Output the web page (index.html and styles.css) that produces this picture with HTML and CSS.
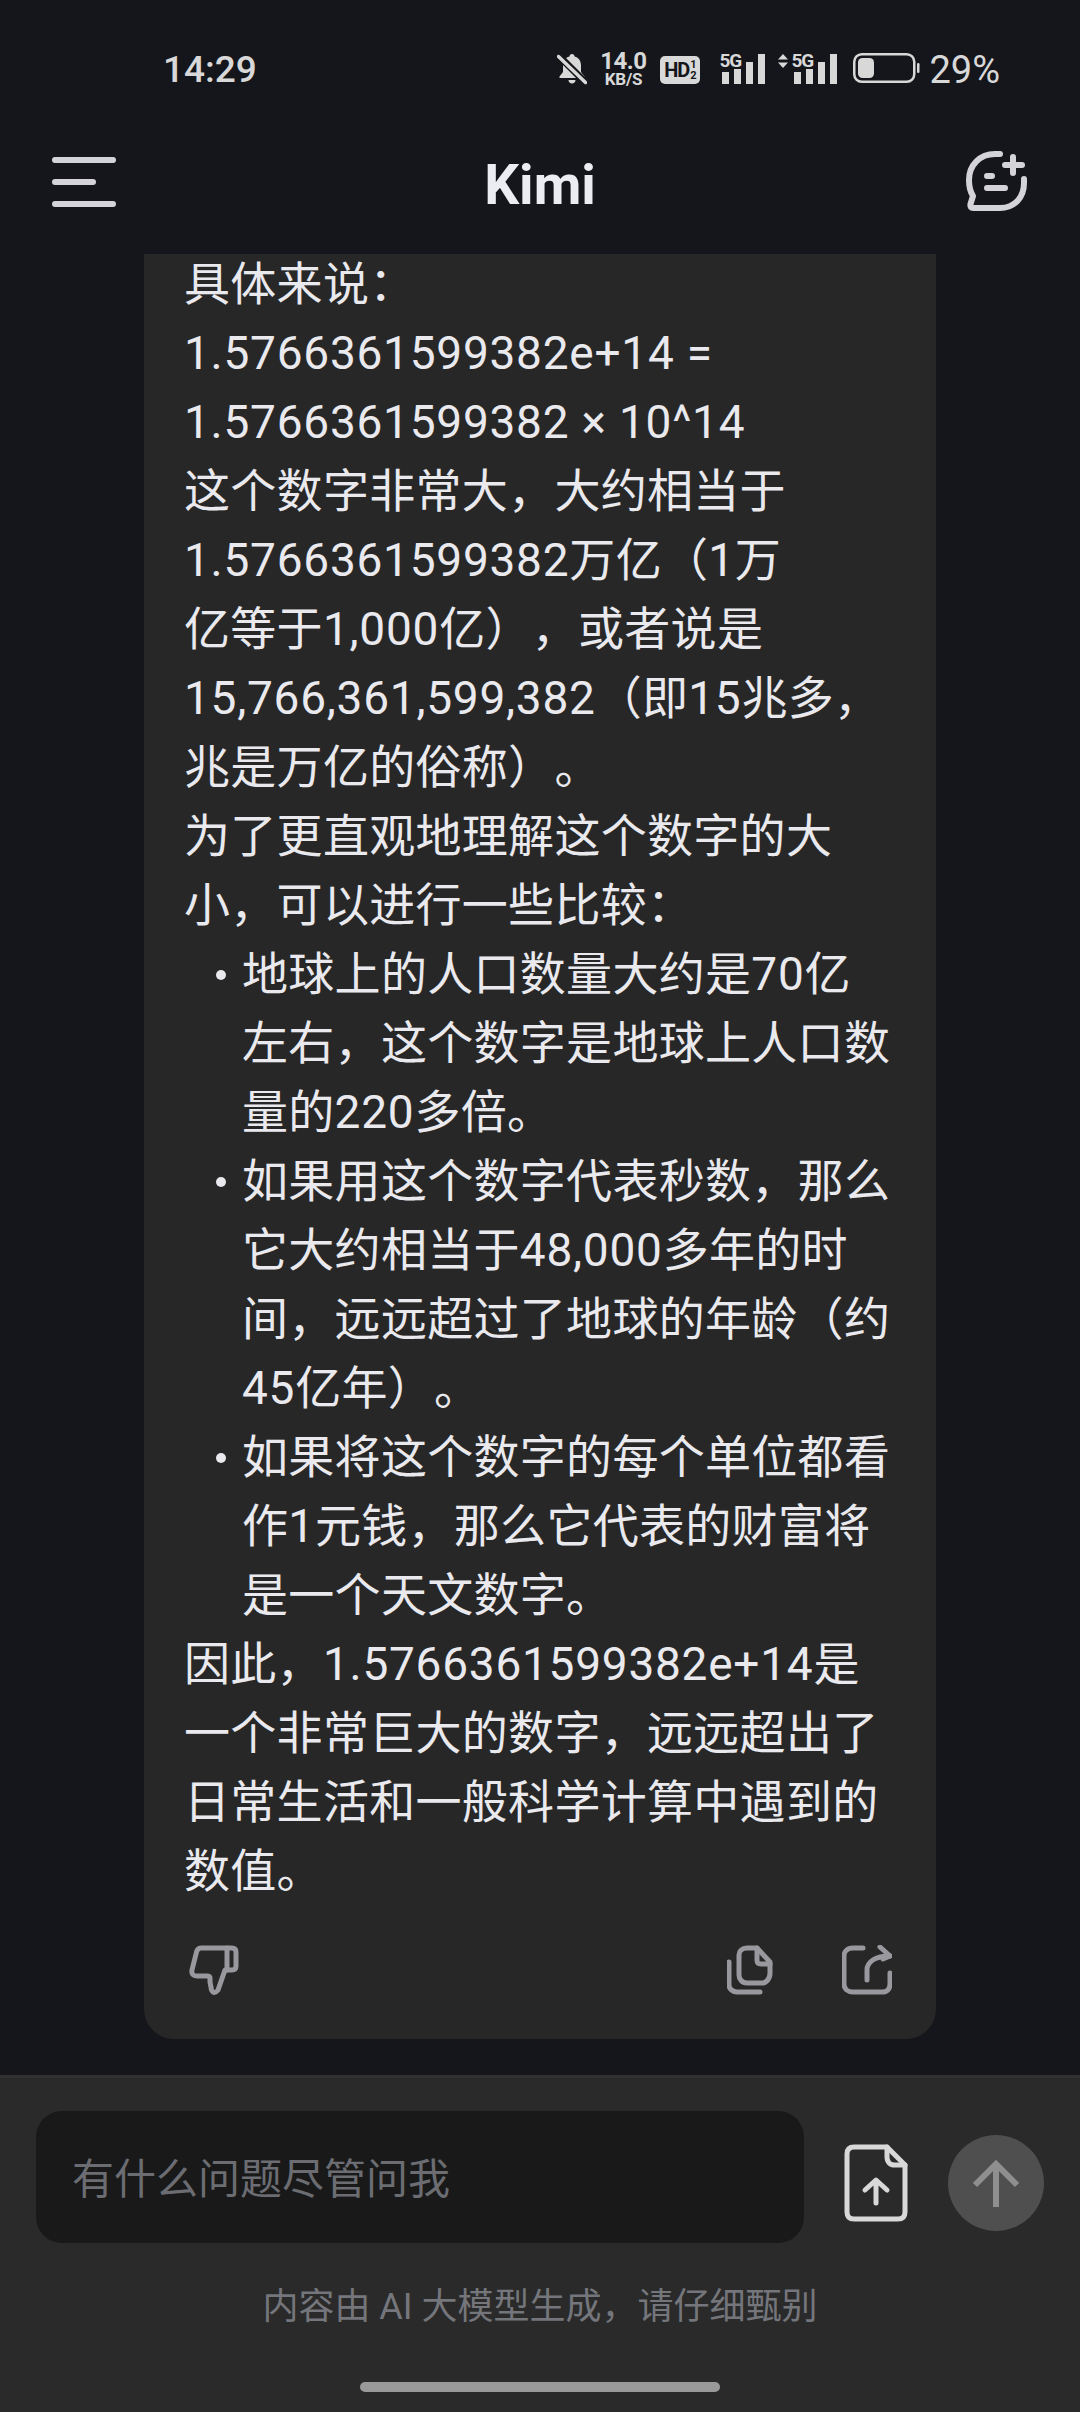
FILE: index.html
```html
<!DOCTYPE html>
<html lang="zh">
<head>
<meta charset="utf-8">
<title>Kimi</title>
<link rel="stylesheet" href="styles.css">
</head>
<body>
<div class="app">
  <div class="status">
    <span class="time">14:29</span>
    <div class="status-icons">
      <svg class="ic-bell" viewBox="0 0 30 33"><path d="M15 2c1.500 0 2.500 1 2.500 2.400C22 5.500 24 9 24 13.500V20l3.500 4.500v1.500H2.500v-1.500L6 20v-6.500C6 9 8 5.500 12.500 4.400 12.500 3 13.500 2 15 2zM11.500 28h7c0 2-1.500 3.500-3.500 3.500s-3.500-1.500-3.500-3.500z" fill="#d8d8d8"/><path d="M2 4l26 26" stroke="#15161b" stroke-width="7"/><path d="M1.500 4.500l27 26" stroke="#d8d8d8" stroke-width="3.500" stroke-linecap="round"/></svg>
      <div class="speed"><span class="speed-num">14.0</span><span class="speed-unit">KB/S</span></div>
      <div class="hd"><span class="hd-t">HD</span><span class="hd-n"><i>1</i><i>2</i></span></div>
      <div class="sig"><span class="sig-t">5G</span>
        <svg class="bars" viewBox="0 0 43 30"><path d="M0 18h7v12H0zM12 15h7v15h-7zM24 8h7v22h-7zM36 0h7v30h-7z" fill="#d8d8d8"/></svg>
      </div>
      <div class="sig sig-two">
        <svg class="updown" viewBox="0 0 10 14"><path d="M5 0l5 5.500H0zM5 14L0 8.500h10z" fill="#d8d8d8"/></svg>
        <span class="sig-t">5G</span>
        <svg class="bars" viewBox="0 0 43 30"><path d="M0 18h7v12H0zM12 15h7v15h-7zM24 8h7v22h-7zM36 0h7v30h-7z" fill="#d8d8d8"/></svg>
      </div>
      <svg class="batt" viewBox="0 0 67 30"><rect x="1.250" y="1.250" width="60" height="27.500" rx="7.500" fill="none" stroke="#d8d8d8" stroke-width="2.500"/><rect x="5" y="5" width="16" height="20" rx="4.500" fill="#d8d8d8"/><rect x="64" y="10" width="2.500" height="10" rx="1.200" fill="#d8d8d8"/></svg>
      <span class="pct">29%</span>
    </div>
  </div>

  <header class="top">
    <div class="menu"><span class="m-long"></span><span class="m-short"></span><span class="m-long"></span></div>
    <h1 class="title">Kimi</h1>
    <svg class="newchat" viewBox="0 0 66 62" fill="none" stroke="#d4d4d8" stroke-width="6" stroke-linecap="round" stroke-linejoin="round"><path d="M36 4H31C16 4 5 15 5 30C5 36 6.500 42 9 46L6.500 54C6 57 7 58 9.500 58H36C51 58 60 47 60 33V29"/><path d="M49 7V23M41 15H58"/><path d="M23 26H28M23 38H41"/></svg>
  </header>

  <main class="messages">
    <article class="card">
      <div class="body">
        <p>具体来说：</p>
        <p><span class="n">1.5766361599382e+14 =</span><br><span class="n">1.5766361599382 × 10^14</span></p>
        <p>这个数字非常大，大约相当于<br><span class="n">1.5766361599382</span>万亿（<span class="n">1</span>万<br>亿等于<span class="n">1,000</span>亿），或者说是<br><span class="n">15,766,361,599,382</span>（即<span class="n">15</span>兆多，<br>兆是万亿的俗称）。</p>
        <p>为了更直观地理解这个数字的大<br>小，可以进行一些比较：</p>
        <ul class="list">
          <li class="item"><span class="dot"></span><span>地球上的人口数量大约是<span class="n">70</span>亿<br>左右，这个数字是地球上人口数<br>量的<span class="n">220</span>多倍。</span></li>
          <li class="item"><span class="dot"></span><span>如果用这个数字代表秒数，那么<br>它大约相当于<span class="n">48,000</span>多年的时<br>间，远远超过了地球的年龄（约<br><span class="n">45</span>亿年）。</span></li>
          <li class="item"><span class="dot"></span><span>如果将这个数字的每个单位都看<br>作<span class="n">1</span>元钱，那么它代表的财富将<br>是一个天文数字。</span></li>
        </ul>
        <p>因此，<span class="n">1.5766361599382e+14</span>是<br>一个非常巨大的数字，远远超出了<br>日常生活和一般科学计算中遇到的<br>数值。</p>
      </div>
      <div class="actions">
        <svg class="a-thumb" viewBox="14 10 50 50" fill="none" stroke="#98989e" stroke-width="5" stroke-linecap="round" stroke-linejoin="round"><path d="M26 13H57Q61 13 61 17V31Q61 35 57 35H50L43 55Q39 60 36.500 55L35 47V43Q35 41 32 41H22Q16 41 17 35L21 19Q22 13 26 13Z"/><path d="M52 13V35"/></svg>
        <div class="a-right">
          <svg class="a-copy" viewBox="12 10 46 50" fill="none" stroke="#98989e" stroke-width="5" stroke-linecap="round" stroke-linejoin="round"><path d="M32 13H42L55 27V38C55 44 51 48 47 48H32C27 48 24 44 24 40V20C24 16 27 13 32 13Z"/><path d="M42 13V25C42 28 43 29 46 29H55"/><path d="M14 27V50C14 54 18 57 22 57H45"/></svg>
          <svg class="a-share" viewBox="127 10 50 50" fill="none" stroke="#98989e" stroke-width="5" stroke-linecap="round" stroke-linejoin="round"><path d="M148 13H138C132 13 129 17 129 21V49C129 54 133 57 138 57H167C172 57 175 54 175 49V38"/><path d="M152 45V35C152 27 160 21 175 21"/><path d="M165 12L175 21L168 24"/></svg>
        </div>
      </div>
    </article>
  </main>

  <footer class="composer">
    <div class="row">
      <div class="input">有什么问题尽管问我</div>
      <svg class="upload" viewBox="0 0 64 78" fill="none" stroke="#d8d8d8" stroke-width="5" stroke-linecap="round" stroke-linejoin="round"><path d="M43 3H10C5.500 3 3 5.500 3 10v58c0 4.500 2.500 7 7 7h44c4.500 0 7-2.500 7-7V21z"/><path d="M43 3v10c0 5 3 8 8 8h10"/><path d="M32 59V37M21 46l11-10 11 10"/></svg>
      <button class="send"><svg class="send-arrow" viewBox="0 0 48 48" fill="none" stroke="#8f8f8f" stroke-width="6"><path d="M24 48V4M3 26L24 5l21 21"/></svg></button>
    </div>
    <p class="note">内容由 AI 大模型生成，请仔细甄别</p>
    <div class="home"></div>
  </footer>
</div>
</body>
</html>
```

FILE: styles.css
```css
* { box-sizing: border-box; }
html, body { margin: 0; padding: 0; background: #15161b; }
.app {
  width: 1080px; height: 2412px; display: flex; flex-direction: column; overflow: hidden;
  background: #15161b;
  font-family: Roboto, "Noto Sans CJK SC", "Noto Sans", sans-serif;
  text-spacing-trim: space-all;
}
.status { height: 100px; flex: none; display: flex; align-items: flex-start; justify-content: space-between; padding: 47px 80px 0 163px; color: #d8d8d8; }
.time { font-size: 37px; line-height: 42px; font-weight: 500; margin-top: 2px; }
.status-icons { display: flex; align-items: flex-start; padding-top: 4px; }
.ic-bell { width: 30px; height: 33px; margin: 1px 13px 0 0; }
.speed { display: flex; flex-direction: column; align-items: center; width: 46px; font-weight: 700; margin: 0 14px 0 0; }
.speed-num { font-size: 24px; line-height: 21px; letter-spacing: -.5px; }
.speed-unit { font-size: 17px; line-height: 15px; letter-spacing: -.3px; }
.hd { width: 40px; height: 28px; margin: 5px 19px 0 0; background: #d8d8d8; border-radius: 5px; color: #15161b; display: flex; align-items: center; justify-content: center; font-weight: 700; }
.hd-t { font-size: 20px; letter-spacing: -1px; }
.hd-n { display: flex; flex-direction: column; font-size: 11px; line-height: 11px; margin-left: 1px; }
.hd-n i { font-style: normal; }
.sig { position: relative; width: 46px; height: 32px; margin: 1px 13px 0 0; display: flex; }
.sig-two { width: 59px; margin-right: 16px; }
.sig-t { font-size: 19px; line-height: 17px; font-weight: 700; letter-spacing: -1px; position: absolute; left: 0; top: 0; }
.sig-two .sig-t { left: 13px; }
.bars { width: 43px; height: 30px; position: absolute; right: 0; top: 2px; }
.updown { position: absolute; left: 0; top: 2px; width: 10px; height: 14px; }
.batt { width: 67px; height: 30px; margin: 2px 9px 0 0; }
.pct { font-size: 38px; line-height: 38px; font-weight: 400; }

.top { height: 154px; flex: none; position: relative; display: flex; align-items: center; justify-content: space-between; padding: 10px 50px 0 52px; }
.menu { display: flex; flex-direction: column; gap: 16px; width: 64px; }
.menu span { display: block; height: 6px; border-radius: 3px; background: #d4d4d8; }
.m-long { width: 64px; }
.m-short { width: 44px; }
.title { margin: 0; position: absolute; left: 0; right: 0; top: 0; text-align: center; font-size: 55px; line-height: 171px; font-weight: 700; color: #ecedf2; }
.newchat { width: 66px; height: 62px; margin-top: -2px; }

.messages { flex: 1; min-height: 0; padding: 0 144px; }
.card { height: 1785px; background: #272727; border-radius: 0 0 30px 30px; padding: 0 41px 0 40px; overflow: hidden; display: flex; flex-direction: column; }
.body { margin-top: -4px; color: #e9e9ee; font-size: 46px; line-height: 69px; white-space: nowrap; letter-spacing: .3px; }
.body p { margin: 0; }
.n { letter-spacing: .75px; }
.list { margin: 0; padding: 0; list-style: none; }
.item { display: grid; grid-template-columns: 58px 1fr; }
.dot { width: 10px; height: 10px; border-radius: 50%; background: #e9e9ee; justify-self: end; margin: 30px 16px 0 0; }
.actions { display: flex; justify-content: space-between; align-items: flex-start; padding: 39px 3px 0 5px; }
.a-right { display: flex; gap: 69px; align-items: flex-start; }
.a-thumb { width: 50px; height: 50px; }
.a-copy { width: 46px; height: 50px; }
.a-share { width: 50px; height: 50px; }

.composer { height: 337px; flex: none; background: #2a2a2a; border-top: 3px solid #303030; position: relative; }
.row { display: flex; align-items: center; padding: 33px 36px 0; }
.input { width: 768px; height: 132px; background: #191919; border-radius: 26px; padding: 0 0 3px 36px; display: flex; align-items: center; font-size: 42px; color: #6b6d73; }
.upload { width: 64px; height: 78px; margin: 12px 0 0 40px; }
.send { width: 96px; height: 96px; margin: 12px 0 0 40px; border: 0; padding: 0; border-radius: 50%; background: #4f4f4f; display: flex; align-items: center; justify-content: center; }
.send-arrow { width: 48px; height: 48px; }
.note { margin: 39px 0 0; text-align: center; font-size: 36px; line-height: 50px; color: #74767c; }
.home { position: absolute; left: 360px; top: 304px; width: 360px; height: 10px; background: #999; border-radius: 5px; }
```
